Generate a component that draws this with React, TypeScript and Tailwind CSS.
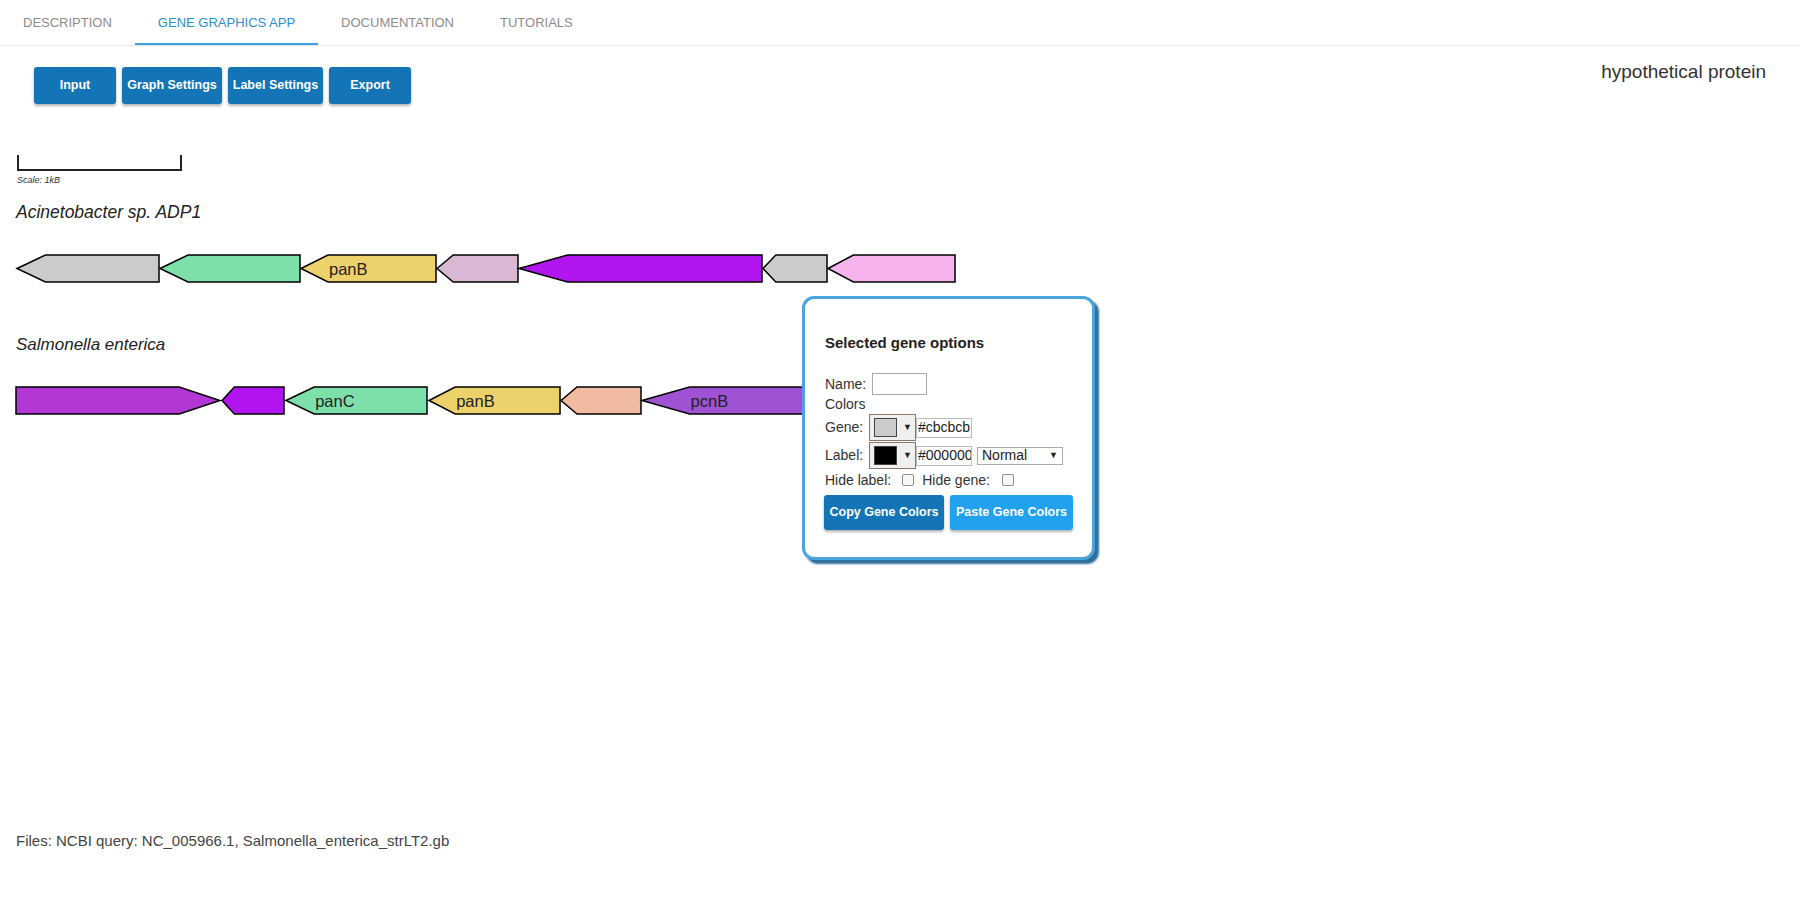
import React from 'react';

type Gene = { s: number; e: number; c: string; d: 1 | -1; l?: string };

const row1: Gene[] = [
  { s: 17, e: 159, c: '#cbcbcb', d: -1 },
  { s: 160, e: 300, c: '#7ddfaa', d: -1 },
  { s: 301, e: 436, c: '#edd16b', d: -1, l: 'panB' },
  { s: 437, e: 518, c: '#d9b8d4', d: -1 },
  { s: 519, e: 762, c: '#b116f0', d: -1 },
  { s: 763, e: 827, c: '#cbcbcb', d: -1 },
  { s: 828, e: 955, c: '#f6b3ee', d: -1 },
];

const row2: Gene[] = [
  { s: 16, e: 220, c: '#b337d4', d: 1 },
  { s: 222, e: 284, c: '#b114ee', d: -1 },
  { s: 286, e: 427, c: '#7ddfaa', d: -1, l: 'panC' },
  { s: 429, e: 560, c: '#edd16b', d: -1, l: 'panB' },
  { s: 561, e: 641, c: '#f0bba1', d: -1 },
  { s: 642, e: 880, c: '#a052d4', d: -1, l: 'pcnB' },
];

const TOP = 1;
const BOTTOM = 28;
const MID = (TOP + BOTTOM) / 2;

function points(g: Gene) {
  const head = (g.e - g.s) * 0.2;
  if (g.d === -1) {
    return `${g.s},${MID} ${g.s + head},${TOP} ${g.e},${TOP} ${g.e},${BOTTOM} ${g.s + head},${BOTTOM}`;
  }
  return `${g.s},${TOP} ${g.e - head},${TOP} ${g.e},${MID} ${g.e - head},${BOTTOM} ${g.s},${BOTTOM}`;
}

function GeneRow({ genes, className }: { genes: Gene[]; className: string }) {
  return (
    <svg className={className} width={1000} height={30}>
      {genes.map((g, i) => (
        <g key={i}>
          <polygon points={points(g)} fill={g.c} stroke="#000" strokeWidth={1.5} />
          {g.l && (
            <text
              x={g.d === -1 ? g.s + (g.e - g.s) * 0.2 + 1 : g.s + 4}
              y={MID + 6}
              fontSize={16.5}
              fill="#222"
              fontFamily="'Liberation Sans', Arial, sans-serif"
            >
              {g.l}
            </text>
          )}
        </g>
      ))}
    </svg>
  );
}

const tabs = ['Description', 'Gene Graphics App', 'Documentation', 'Tutorials'];

export default function App() {
  return (
    <div className="relative w-full h-[900px] bg-white overflow-hidden font-['Liberation_Sans',Arial,sans-serif]">
      {/* Tabs */}
      <nav className="flex h-[46px] border-b border-[#e6e6e6]">
        {tabs.map((t, i) => (
          <div
            key={t}
            className={
              i === 1
                ? 'relative flex items-center h-full px-[23px] text-[13px] uppercase text-[#2b8fd2]'
                : 'relative flex items-center h-full px-[23px] text-[13px] uppercase text-[#8c8c8c]'
            }
          >
            {t}
            {i === 1 && <span className="absolute left-0 right-0 bottom-0 h-[2px] bg-[#3d9ee3]" />}
          </div>
        ))}
      </nav>

      {/* Toolbar */}
      <div className="flex justify-between items-start">
        <div className="mt-[21px] ml-[34px] flex gap-[6px]">
          {[
            ['Input', 'w-[82px]'],
            ['Graph Settings', 'w-[100px]'],
            ['Label Settings', 'w-[95px]'],
            ['Export', 'w-[82px]'],
          ].map(([label, w]) => (
            <button
              key={label}
              className={`${w} h-[37px] rounded-[3px] bg-[#1375b6] text-white text-[12.5px] font-bold shadow-[0_2px_3px_rgba(0,0,0,0.3)]`}
            >
              {label}
            </button>
          ))}
        </div>
        <div className="mt-[15px] mr-[34px] text-[19px] leading-[22px] text-[#333]">hypothetical protein</div>
      </div>

      {/* Scale */}
      <div className="ml-[17px] mt-[51px] w-[165px] h-[16px] border-x-2 border-b-2 border-[#222]" />
      <div className="ml-[17px] mt-[4px] text-[9px] leading-[11px] italic text-[#333]">Scale: 1kB</div>

      <div className="ml-[16px] mt-[16px] text-[17.5px] leading-[20px] italic text-[#222]">Acinetobacter sp. ADP1</div>
      <GeneRow genes={row1} className="block mt-[32px]" />

      <div className="ml-[16px] mt-[51px] text-[17px] leading-[20px] italic text-[#222]">Salmonella enterica</div>
      <GeneRow genes={row2} className="block mt-[31px]" />

      <div className="ml-[16px] mt-[416px] text-[15px] leading-[17px] text-[#444]">
        Files: NCBI query: NC_005966.1, Salmonella_enterica_strLT2.gb
      </div>

      {/* Selected gene popup */}
      <div className="absolute left-[802px] top-[296px] w-[293px] h-[264px] rounded-[12px] border-[3px] border-[#4ca4de] bg-white shadow-[4px_4px_2px_#2f6f9c] pl-[20px] pt-[35px] text-[14px] text-[#333]">
        <div className="text-[15px] leading-[18px] font-bold text-[#222]">Selected gene options</div>

        <div className="mt-[21px] flex items-center gap-[6px] h-[22px]">
          <span>Name:</span>
          <span className="w-[55px] h-[22px] border border-[#a9a9a9] bg-white" />
        </div>
        <div className="mt-[1px] leading-[16px]">Colors</div>

        <div className="mt-[2px] flex items-center h-[27px]">
          <span className="w-[44px]">Gene:</span>
          <span className="w-[47px] h-[27px] border border-[#8b7766] bg-[#efefef] flex items-center pl-[4px]">
            <span className="w-[23px] h-[19px] border border-[#444] bg-[#cbcbcb]" />
            <span className="ml-[6px] text-[9px] text-[#222]">▼</span>
          </span>
          <input
            readOnly
            value="#cbcbcb"
            className="w-[56px] h-[20px] border border-[#bbb] pl-[1px] text-[14px] text-[#222] outline-none"
          />
        </div>

        <div className="mt-[1px] flex items-center h-[27px]">
          <span className="w-[44px]">Label:</span>
          <span className="w-[47px] h-[27px] border border-[#8b7766] bg-[#efefef] flex items-center pl-[4px]">
            <span className="w-[23px] h-[19px] border border-[#444] bg-black" />
            <span className="ml-[6px] text-[9px] text-[#222]">▼</span>
          </span>
          <input
            readOnly
            value="#000000"
            className="w-[56px] h-[20px] border border-[#bbb] pl-[1px] text-[14px] text-[#222] outline-none"
          />
          <span className="ml-[5px] w-[86px] h-[18px] border border-[#aaa] bg-white flex items-center justify-between px-[4px] text-[14px] text-[#222]">
            <span>Normal</span>
            <span className="text-[9px]">▼</span>
          </span>
        </div>

        <div className="mt-[3px] flex items-center leading-[16px]">
          <span>Hide label:</span>
          <span className="ml-[11px] w-[12px] h-[12px] border border-[#8f8f8f] rounded-[2px] bg-[#f7f7f7]" />
          <span className="ml-[8px]">Hide gene:</span>
          <span className="ml-[12px] w-[12px] h-[12px] border border-[#8f8f8f] rounded-[2px] bg-[#f7f7f7]" />
        </div>

        <div className="mt-[7px] -ml-[1px] flex gap-[6px]">
          <button className="w-[120px] h-[35px] rounded-[3px] bg-[#1375b6] text-white text-[12.5px] font-bold shadow-[0_2px_3px_rgba(0,0,0,0.3)]">
            Copy Gene Colors
          </button>
          <button className="w-[123px] h-[35px] rounded-[3px] bg-[#22a1ee] text-white text-[12.5px] font-bold shadow-[0_2px_3px_rgba(0,0,0,0.3)]">
            Paste Gene Colors
          </button>
        </div>
      </div>
    </div>
  );
}
